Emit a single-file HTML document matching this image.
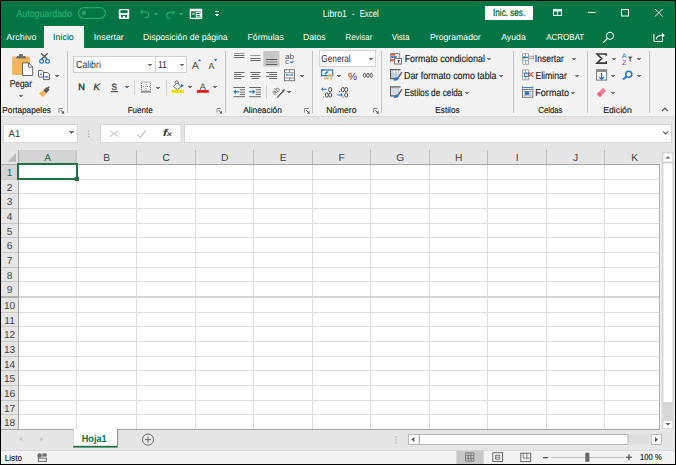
<!DOCTYPE html>
<html><head><meta charset="utf-8"><style>
html,body{margin:0;padding:0;width:676px;height:465px;overflow:hidden;background:#fff}
svg{display:block}
text{font-family:"Liberation Sans",sans-serif}
</style></head><body>
<svg width="676" height="465" viewBox="0 0 676 465">
<rect x="0" y="0" width="676" height="465" fill="#000" />
<rect x="1" y="1" width="674" height="463" fill="#fff" />
<rect x="1" y="1" width="674" height="47" fill="#037544" />
<rect x="1" y="48" width="674" height="68" fill="#f3f3f3" />
<rect x="1" y="116" width="674" height="1" fill="#d8d8d8" />
<rect x="1" y="117" width="674" height="33" fill="#e6e6e6" />
<rect x="78.6" y="7.6" width="26.8" height="10.8" rx="5.4" fill="none" stroke="#22a667" stroke-width="1.3"/>
<circle cx="84" cy="13" r="2.2" fill="#22a667"/>
<rect x="118.8" y="9.1" width="10.4" height="9.8" fill="#fff" />
<rect x="120.4" y="10.2" width="7.2" height="2.9" fill="#037544" />
<rect x="121" y="14.9" width="6" height="2.6" fill="#037544" />
<rect x="122.9" y="15.9" width="2.2" height="2.2" fill="#fff" />
<path d="M141 11.8h4.8a2.9 2.9 0 0 1 0 5.8h-0.8" fill="none" stroke="#22a667" stroke-width="1.3" />
<path d="M139.8 11.8l2.8-2.6v5.2z" fill="#22a667" />
<path d="M154 13h4v1h-1v1h-2v-1h-1z" fill="#22a667"/>
<path d="M174 12.5h-4.5a2.9 2.9 0 0 0 0 5.8h0.8" fill="none" stroke="#22a667" stroke-width="1.3" />
<path d="M175.4 12.5l-2.8-2.6v5.2z" fill="#22a667" />
<path d="M179 13h4v1h-1v1h-2v-1h-1z" fill="#22a667"/>
<rect x="190.4" y="9.4" width="11.2" height="9" fill="none" stroke="#fff" stroke-width="1.3"/>
<rect x="190.5" y="9.5" width="11" height="1.8" fill="#fff" />
<rect x="192" y="13.5" width="3" height="1" fill="#fff" />
<rect x="196.3" y="12.3" width="4" height="2.3" fill="none" stroke="#fff" stroke-width="1"/>
<rect x="196.3" y="14.6" width="4" height="2.3" fill="none" stroke="#fff" stroke-width="1"/>
<rect x="215.3" y="11" width="3.5" height="1" fill="#fff" />
<path d="M215 14h4v1h-1v1h-2v-1h-1z" fill="#fff"/>
<rect x="485" y="6" width="48" height="14" fill="#fff" />
<rect x="553.5" y="9.5" width="8" height="6" fill="none" stroke="#fff" stroke-width="1"/>
<rect x="554" y="10" width="7" height="1.5" fill="#fff" />
<rect x="557" y="10" width="1" height="5" fill="#fff" />
<rect x="588" y="12" width="7.5" height="1" fill="#fff" />
<rect x="621.5" y="9.5" width="7" height="6.5" fill="none" stroke="#fff" stroke-width="1"/>
<path d="M655 9l7.5 7.5M662.5 9l-7.5 7.5" fill="none" stroke="#fff" stroke-width="1" />
<rect x="44" y="26" width="40" height="22" fill="#f3f3f3" />
<circle cx="610" cy="35.8" r="3.6" fill="none" stroke="#fff" stroke-width="1"/>
<path d="M607.4 38.5l-4.2 4.2" fill="none" stroke="#fff" stroke-width="1.1" />
<path d="M653.9 34v7.5h8.6v-3.5" fill="none" stroke="#fff" stroke-width="1" />
<path d="M656.3 39.5c0-3 2-4.2 6-4.2" fill="none" stroke="#fff" stroke-width="1.1" />
<path d="M662 32.7l2.8 2.6-2.8 2.6z" fill="#fff" />
<rect x="67" y="51" width="1" height="62" fill="#c4c4c4" />
<rect x="225" y="51" width="1" height="62" fill="#c4c4c4" />
<rect x="312" y="51" width="1" height="62" fill="#c4c4c4" />
<rect x="381" y="51" width="1" height="62" fill="#c4c4c4" />
<rect x="513" y="51" width="1" height="62" fill="#c4c4c4" />
<rect x="587" y="51" width="1" height="62" fill="#c4c4c4" />
<rect x="649" y="51" width="1" height="62" fill="#c4c4c4" />
<path d="M59.0 112.5v-4h4" fill="none" stroke="#8a8a8a" stroke-width="1" />
<path d="M60.7 110.2l3.3 3.3" fill="none" stroke="#555" stroke-width="1" />
<path d="M64.0 110.8v2.7h-2.7z" fill="#555" />
<path d="M217.0 112.5v-4h4" fill="none" stroke="#8a8a8a" stroke-width="1" />
<path d="M218.7 110.2l3.3 3.3" fill="none" stroke="#555" stroke-width="1" />
<path d="M222.0 110.8v2.7h-2.7z" fill="#555" />
<path d="M304.5 112.5v-4h4" fill="none" stroke="#8a8a8a" stroke-width="1" />
<path d="M306.2 110.2l3.3 3.3" fill="none" stroke="#555" stroke-width="1" />
<path d="M309.5 110.8v2.7h-2.7z" fill="#555" />
<path d="M373.5 112.5v-4h4" fill="none" stroke="#8a8a8a" stroke-width="1" />
<path d="M375.2 110.2l3.3 3.3" fill="none" stroke="#555" stroke-width="1" />
<path d="M378.5 110.8v2.7h-2.7z" fill="#555" />
<path d="M662 111l2.9-2.9 2.9 2.9" fill="none" stroke="#555" stroke-width="1.2" />
<rect x="12.1" y="56.5" width="17.9" height="18.5" rx="1.2" fill="#f2b660"/>
<path d="M16 58.6h10.3l-1-2.6h-8.3z" fill="#6e6e6e" />
<rect x="18.8" y="54" width="4.2" height="2.4" rx="1" fill="#6e6e6e"/>
<path d="M22.5 62.9h6.2l4 4v8.6h-10.2z" fill="#fff" stroke="#666" stroke-width="1" />
<path d="M28.5 62.9v4.2h4.2" fill="none" stroke="#666" stroke-width="1" />
<path d="M19 95h4v1h-1v1h-2v-1h-1z" fill="#737373"/>
<path d="M41 53.2l6.8 6.6M47.8 53.2l-6.8 6.6" fill="none" stroke="#505050" stroke-width="1.2" />
<circle cx="41.6" cy="61.2" r="1.9" fill="none" stroke="#2b79c2" stroke-width="1.2"/>
<circle cx="47.5" cy="61.2" r="1.9" fill="none" stroke="#2b79c2" stroke-width="1.2"/>
<path d="M38.6 70.4h3.5l1.4 1.4v5.2h-4.9z" fill="#fff" stroke="#666" stroke-width="1" />
<path d="M43.5 72.5h4.3l1.8 1.8v5.3h-6.1z" fill="#fff" stroke="#666" stroke-width="1" />
<rect x="40" y="73.5" width="2" height="1.3" fill="#2b79c2" />
<rect x="44.5" y="76.2" width="4" height="1.3" fill="#2b79c2" />
<path d="M55 75h4v1h-1v1h-2v-1h-1z" fill="#737373"/>
<path d="M38.9 93.6l3.8-3.2 3.6 3.4-3.4 3.3z" fill="#f2b660" />
<path d="M43.2 90.2l3.6-3.2 2.8 2.8-3.4 3.5z" fill="#5a5a5a" />
<path d="M47.5 87.6l1.4-1.3 1 1-1.3 1.4z" fill="#5a5a5a" />
<rect x="73.5" y="56.5" width="82" height="16" fill="#fff" stroke="#d2d2d2" stroke-width="1"/>
<rect x="155.5" y="56.5" width="31" height="16" fill="#fff" stroke="#d2d2d2" stroke-width="1"/>
<path d="M148 64h4v1h-1v1h-2v-1h-1z" fill="#737373"/>
<path d="M180 64h4v1h-1v1h-2v-1h-1z" fill="#737373"/>
<text x="191.8" y="68.8" font-size="10.2" fill="#4a4a4a" textLength="7.1" lengthAdjust="spacingAndGlyphs" text-rendering="geometricPrecision">A</text>
<path d="M197.8 61.3l1.75-2.3 1.75 2.3z" fill="#2b79c2" />
<text x="208.5" y="68.8" font-size="8.6" fill="#4a4a4a" textLength="5.8" lengthAdjust="spacingAndGlyphs" text-rendering="geometricPrecision">A</text>
<path d="M213.9 59.1h3.3l-1.65 2.5z" fill="#2b79c2" />
<text x="78.2" y="90" font-size="9.2" fill="#3a3a3a" textLength="6.6" lengthAdjust="spacingAndGlyphs" stroke="#3a3a3a" stroke-width="0.45" text-rendering="geometricPrecision">N</text>
<text x="93.6" y="90" font-size="9.2" fill="#3a3a3a" textLength="6.4" lengthAdjust="spacingAndGlyphs" font-style="italic" stroke="#3a3a3a" stroke-width="0.3" text-rendering="geometricPrecision">K</text>
<text x="111.5" y="90" font-size="9.2" fill="#3a3a3a" textLength="5.4" lengthAdjust="spacingAndGlyphs" stroke="#3a3a3a" stroke-width="0.3" text-rendering="geometricPrecision">S</text>
<rect x="111" y="91" width="7" height="1.2" fill="#555" />
<path d="M125 86h4v1h-1v1h-2v-1h-1z" fill="#737373"/>
<rect x="134" y="80" width="1" height="15" fill="#d0d0d0" />
<rect x="141.5" y="82" width="9" height="9" fill="none" stroke="#777" stroke-width="1" stroke-dasharray="1 1"/>
<path d="M141 86.5h10M146 82v9" fill="none" stroke="#999" stroke-width="1" stroke-dasharray="1 1"/>
<rect x="141" y="91.4" width="10" height="1.1" fill="#666" />
<path d="M156 87h4v1h-1v1h-2v-1h-1z" fill="#737373"/>
<rect x="166" y="80" width="1" height="15" fill="#d0d0d0" />
<path d="M175.3 83.8v-1.5a1.5 1.5 0 0 1 3 0v2" fill="none" stroke="#707070" stroke-width="1" />
<path d="M173.6 86.3l3.6-3.2 3.8 3.4-3.6 3.2z" fill="#fff" stroke="#707070" stroke-width="1" />
<path d="M180.8 83.6l3.2 2.2-3.2 1.8z" fill="#2b79c2" />
<rect x="172" y="89.8" width="12" height="3.1" fill="#ece00a" />
<path d="M188 86h4v1h-1v1h-2v-1h-1z" fill="#737373"/>
<text x="199.6" y="89.6" font-size="9.6" fill="#505050" textLength="6.5" lengthAdjust="spacingAndGlyphs" text-rendering="geometricPrecision">A</text>
<rect x="196.8" y="90" width="12" height="2.8" fill="#e42222" />
<path d="M213 86h4v1h-1v1h-2v-1h-1z" fill="#737373"/>
<rect x="234" y="53" width="10.5" height="1" fill="#9a9a9a" />
<rect x="234" y="55" width="10.5" height="1" fill="#6a6a6a" />
<rect x="234" y="57" width="10.5" height="1" fill="#6a6a6a" />
<rect x="250.2" y="55" width="10.300000000000011" height="1" fill="#9a9a9a" />
<rect x="250.2" y="58" width="10.300000000000011" height="1" fill="#6a6a6a" />
<rect x="250.2" y="60" width="10.300000000000011" height="1" fill="#6a6a6a" />
<rect x="263.3" y="51" width="16.2" height="15.6" fill="#c8c8c8" />
<rect x="266.2" y="59" width="10.900000000000034" height="1" fill="#5a5a5a" />
<rect x="266.2" y="61.5" width="10.900000000000034" height="1" fill="#8a8a8a" />
<rect x="266.2" y="64" width="10.900000000000034" height="1" fill="#5a5a5a" />
<text x="285" y="58.8" font-size="7.6" fill="#555" textLength="9.2" lengthAdjust="spacingAndGlyphs" text-rendering="geometricPrecision">ab</text>
<text x="285" y="63.6" font-size="7.6" fill="#555" textLength="4" lengthAdjust="spacingAndGlyphs" text-rendering="geometricPrecision">c</text>
<path d="M290.6 62.3h2.5v-1.6" fill="none" stroke="#2b79c2" stroke-width="1" />
<path d="M289.8 62.3l1.5-1.3v2.6z" fill="#2b79c2" />
<rect x="234.1" y="72" width="10.400000000000006" height="1" fill="#6a6a6a" />
<rect x="250.2" y="72" width="10.300000000000011" height="1" fill="#6a6a6a" />
<rect x="266.2" y="72" width="10.900000000000034" height="1" fill="#6a6a6a" />
<rect x="234.1" y="74" width="7.300000000000011" height="1" fill="#6a6a6a" />
<rect x="251.6" y="74" width="7.500000000000028" height="1" fill="#6a6a6a" />
<rect x="269.2" y="74" width="7.900000000000034" height="1" fill="#6a6a6a" />
<rect x="234.1" y="76" width="10.400000000000006" height="1" fill="#6a6a6a" />
<rect x="250.2" y="76" width="10.300000000000011" height="1" fill="#6a6a6a" />
<rect x="266.2" y="76" width="10.900000000000034" height="1" fill="#6a6a6a" />
<rect x="234.1" y="78" width="7.300000000000011" height="1" fill="#6a6a6a" />
<rect x="251.6" y="78" width="7.500000000000028" height="1" fill="#6a6a6a" />
<rect x="269.2" y="78" width="7.900000000000034" height="1" fill="#6a6a6a" />
<rect x="284.5" y="69.7" width="10" height="11" fill="#fff" stroke="#7a7a7a" stroke-width="1"/>
<rect x="284.5" y="72.3" width="10.0" height="1" fill="#888" />
<rect x="284.5" y="77.5" width="10.0" height="1" fill="#888" />
<rect x="289.2" y="70" width="1" height="2.299999999999997" fill="#888" />
<rect x="289.2" y="78" width="1" height="2.5" fill="#888" />
<path d="M286.5 75h6" fill="none" stroke="#2b79c2" stroke-width="0.9" />
<path d="M285.8 75l1.4-1.3v2.6z M293.2 75l-1.4-1.3v2.6z" fill="#2b79c2" />
<path d="M300 75h4v1h-1v1h-2v-1h-1z" fill="#737373"/>
<rect x="233.3" y="87" width="11.699999999999989" height="1" fill="#6a6a6a" />
<rect x="233.3" y="96.2" width="11.699999999999989" height="1" fill="#6a6a6a" />
<rect x="239.8" y="89.2" width="5.199999999999989" height="1" fill="#6a6a6a" />
<rect x="239.8" y="91.7" width="5.199999999999989" height="1" fill="#6a6a6a" />
<rect x="239.8" y="94" width="5.199999999999989" height="1" fill="#6a6a6a" />
<path d="M234.10000000000002 91.8h5.2" fill="none" stroke="#2b79c2" stroke-width="1.3" />
<path d="M233.3 91.8l2.6-2.4v4.8z" fill="#2b79c2" />
<rect x="249.2" y="87" width="11.699999999999989" height="1" fill="#6a6a6a" />
<rect x="249.2" y="96.2" width="11.699999999999989" height="1" fill="#6a6a6a" />
<rect x="255.7" y="89.2" width="5.199999999999989" height="1" fill="#6a6a6a" />
<rect x="255.7" y="91.7" width="5.199999999999989" height="1" fill="#6a6a6a" />
<rect x="255.7" y="94" width="5.199999999999989" height="1" fill="#6a6a6a" />
<path d="M249.2 91.8h5.2" fill="none" stroke="#2b79c2" stroke-width="1.3" />
<path d="M255.2 91.8l-2.6-2.4v4.8z" fill="#2b79c2" />
<rect x="266" y="85" width="1" height="14" fill="#d0d0d0" />
<g transform="translate(274.6 95.2) rotate(-45)"><text x="0" y="0" font-size="7.4" fill="#555" textLength="8" lengthAdjust="spacingAndGlyphs" text-rendering="geometricPrecision">ab</text></g>
<path d="M277.2 97.6l6.2-6.6" fill="none" stroke="#555" stroke-width="1.1" />
<path d="M284.8 89.3l-0.5 3-2.6-2.4z" fill="#555" />
<path d="M287 91h4v1h-1v1h-2v-1h-1z" fill="#737373"/>
<rect x="319.5" y="50.5" width="56" height="16" fill="#fff" stroke="#d2d2d2" stroke-width="1"/>
<path d="M369 58h4v1h-1v1h-2v-1h-1z" fill="#737373"/>
<rect x="321.6" y="70" width="11" height="5.6" fill="#fff" stroke="#2b79c2" stroke-width="1.3"/>
<path d="M321 69.4h3l-3 2.6z M333.2 76.2h-3l3-2.6z" fill="#2b79c2" />
<path d="M325.3 74.6c0.6-2.4 1.6-3 3.2-2.6" fill="none" stroke="#2b79c2" stroke-width="1.5" />
<rect x="328.2" y="74.3" width="4.6" height="1.8" fill="#f2b660" />
<rect x="324" y="77.5" width="4.7" height="1.9" fill="#f2b660" />
<rect x="330.2" y="77.5" width="2" height="1.9" fill="#f2b660" />
<path d="M337 75h4v1h-1v1h-2v-1h-1z" fill="#737373"/>
<text x="348" y="80" font-size="10.6" fill="#505050" textLength="9.2" lengthAdjust="spacingAndGlyphs" text-rendering="geometricPrecision">%</text>
<ellipse cx="364.6" cy="75.3" rx="1.2" ry="2.1" fill="none" stroke="#505050" stroke-width="0.9"/>
<ellipse cx="367.90000000000003" cy="75.3" rx="1.2" ry="2.1" fill="none" stroke="#505050" stroke-width="0.9"/>
<ellipse cx="371.20000000000005" cy="75.3" rx="1.2" ry="2.1" fill="none" stroke="#505050" stroke-width="0.9"/>
<path d="M322 89.3h4.5" fill="none" stroke="#2b79c2" stroke-width="1.1" />
<path d="M321 89.3l2.2-2v4z" fill="#2b79c2" />
<ellipse cx="330.2" cy="89.6" rx="1.5" ry="2.2" fill="none" stroke="#505050" stroke-width="1"/>
<ellipse cx="326.8" cy="95" rx="1.5" ry="2.2" fill="none" stroke="#505050" stroke-width="1"/>
<ellipse cx="330.2" cy="95" rx="1.5" ry="2.2" fill="none" stroke="#505050" stroke-width="1"/>
<rect x="323.2" y="96.6" width="1" height="1" fill="#505050" />
<ellipse cx="342.8" cy="89.6" rx="1.5" ry="2.2" fill="none" stroke="#505050" stroke-width="1"/>
<ellipse cx="346.2" cy="89.6" rx="1.5" ry="2.2" fill="none" stroke="#505050" stroke-width="1"/>
<rect x="339.2" y="91.2" width="1" height="1" fill="#505050" />
<ellipse cx="346.2" cy="95" rx="1.5" ry="2.2" fill="none" stroke="#505050" stroke-width="1"/>
<rect x="342.6" y="96.6" width="1" height="1" fill="#505050" />
<path d="M337.6 95h4" fill="none" stroke="#2b79c2" stroke-width="1.1" />
<path d="M343 95l-2.2-2v4z" fill="#2b79c2" />
<path d="M390.6 62.5v-9h9v4.5" fill="none" stroke="#8a8a8a" stroke-width="1" />
<path d="M395.5 53.6v4.3M390.6 56.6h9" fill="none" stroke="#c8c8c8" stroke-width="0.8" />
<rect x="391.1" y="53.8" width="3.9" height="1.8" fill="#e8532a" />
<rect x="391.1" y="56.2" width="5.6" height="1.6" fill="#2b79c2" />
<rect x="391.1" y="59" width="2.5" height="2.4" fill="#e8532a" />
<rect x="394.6" y="58.4" width="7" height="5.6" fill="#fff" stroke="#707070" stroke-width="1"/>
<path d="M397 60.3h3.4l-1.2 1.3v1.2h-1v-1.2z" fill="#333" />
<path d="M487 58h4v1h-1v1h-2v-1h-1z" fill="#7a7a7a"/>
<rect x="391" y="70" width="8.5" height="8" fill="#fff" />
<rect x="391" y="72.5" width="7.5" height="5.5" fill="#c9ddf1" />
<path d="M392.9 70v8M395.8 70v8M398.7 70v5" fill="none" stroke="#b0b0b0" stroke-width="0.8" />
<path d="M400.6 69.6h-10v9h5.2" fill="none" stroke="#5e5e5e" stroke-width="1.2" />
<path d="M397.6 77.2l3.4-4.9c0.7-1 1.6-0.8 1.2 0.4l-3 5z" fill="#585858" />
<path d="M393.4 80.6c0.6-2.4 2.2-3.4 4.2-3.6l1.4 1.2c-0.6 2-2.6 2.6-5.6 2.4z" fill="#2b79c2" />
<rect x="391" y="87.2" width="8.5" height="8" fill="#fff" />
<rect x="393.3" y="88.60000000000001" width="5.2" height="5.4" fill="#c9ddf1" />
<path d="M392.8 87.2v8M398.7 87.2v5.5M393 88.10000000000001h5.6" fill="none" stroke="#b0b0b0" stroke-width="0.8" />
<path d="M400.6 86.8h-10v9h5.2" fill="none" stroke="#5e5e5e" stroke-width="1.2" />
<path d="M397.6 94.4l3.4-4.9c0.7-1 1.6-0.8 1.2 0.4l-3 5z" fill="#585858" />
<path d="M393.4 97.8c0.6-2.4 2.2-3.4 4.2-3.6l1.4 1.2c-0.6 2-2.6 2.6-5.6 2.4z" fill="#2b79c2" />
<path d="M499 75h4v1h-1v1h-2v-1h-1z" fill="#7a7a7a"/>
<path d="M465 92h4v1h-1v1h-2v-1h-1z" fill="#7a7a7a"/>
<path d="M522.6 53.7h6v10.6h-6zM522.6 57.2h6M522.6 60.8h6M525.6 60.8v3.5M525.6 53.7v3.5" fill="#fff" stroke="#9a9a9a" stroke-width="0.9" />
<rect x="528.6" y="56.2" width="5" height="2.5" fill="#dfe6ee" stroke="#9a9a9a" stroke-width="0.9"/>
<path d="M523.5 57.5h4.5" fill="none" stroke="#2b79c2" stroke-width="1.2" />
<path d="M522.5 57.5l2.2-2v4z" fill="#2b79c2" />
<path d="M572 58h4v1h-1v1h-2v-1h-1z" fill="#7a7a7a"/>
<path d="M522.6 69.8h6v10h-6zM522.6 73.1h6M522.6 76.5h6M525.6 69.8v3.3M525.6 76.5v3.3" fill="#fff" stroke="#9a9a9a" stroke-width="0.9" />
<rect x="524.5" y="73.2" width="4" height="3.2" fill="#cfe0f0" stroke="#2b79c2" stroke-width="0.9"/>
<path d="M528.4 72.2l4.6 4.6M533 72.2l-4.6 4.6" fill="none" stroke="#e8502e" stroke-width="1.2" />
<path d="M575 75h4v1h-1v1h-2v-1h-1z" fill="#7a7a7a"/>
<path d="M522.5 87.6h10.3" fill="none" stroke="#2b79c2" stroke-width="1" />
<path d="M522.5 86.3v2.6M532.8 86.3v2.6" fill="none" stroke="#2b79c2" stroke-width="0.8" />
<rect x="522.5" y="89.5" width="10.3" height="7.8" fill="#fff" stroke="#7a7a7a" stroke-width="1"/>
<path d="M524.8 89.5v7.8M530.3 89.5v7.8M522.5 91.5h10.3M522.5 95.3h10.3" fill="none" stroke="#aaa" stroke-width="0.8" />
<rect x="525" y="91.2" width="4.2" height="3.8" fill="#2b79c2" />
<path d="M571 92h4v1h-1v1h-2v-1h-1z" fill="#7a7a7a"/>
<path d="M606.3 55.8v-1.8h-9.3l4.6 4.5-4.6 4.6h9.3v-1.8" fill="none" stroke="#3a3a3a" stroke-width="1.6" stroke-linejoin="miter"/>
<path d="M612 58h4v1h-1v1h-2v-1h-1z" fill="#7a7a7a"/>
<text x="621.8" y="58.3" font-size="6.6" fill="#2b79c2" textLength="4.8" lengthAdjust="spacingAndGlyphs" text-rendering="geometricPrecision">A</text>
<text x="621.8" y="64.6" font-size="6.6" fill="#8a3fb5" textLength="4.6" lengthAdjust="spacingAndGlyphs" text-rendering="geometricPrecision">Z</text>
<path d="M627.8 56.5h4.7l-1.7 2.4v2.5h-1.3v-2.5z" fill="#666" />
<path d="M637 58h4v1h-1v1h-2v-1h-1z" fill="#7a7a7a"/>
<rect x="596.6" y="69.9" width="10" height="10.2" fill="#fff" stroke="#7a7a7a" stroke-width="1"/>
<rect x="596.1" y="69.4" width="11" height="2.6" fill="#8a8a8a" />
<path d="M601.6 73v6.3M599.2 77l2.4 2.4 2.4-2.4" fill="none" stroke="#2b79c2" stroke-width="1.3" />
<path d="M611 75h4v1h-1v1h-2v-1h-1z" fill="#7a7a7a"/>
<circle cx="628.8" cy="74.2" r="3" fill="none" stroke="#2b79c2" stroke-width="1.6"/>
<path d="M626.6 76.5l-3.6 3" fill="none" stroke="#2b79c2" stroke-width="2" />
<path d="M637 75h4v1h-1v1h-2v-1h-1z" fill="#7a7a7a"/>
<path d="M597 94l6-6.2 3 3-6 6.2z" fill="#f07b9b" />
<path d="M597 94l2 -2 3 3-2 2z" fill="#e8607f" />
<path d="M611 92h4v1h-1v1h-2v-1h-1z" fill="#7a7a7a"/>
<rect x="3.5" y="124.5" width="74" height="18" fill="#fff" stroke="#d6d6d6" stroke-width="1"/>
<path d="M69 131h5v1h-1v1h-1v1h-1v-1h-1v-1h-1z" fill="#737373"/>
<rect x="88.3" y="130.6" width="1" height="1.2" fill="#999" />
<rect x="88.3" y="133.3" width="1" height="1.2" fill="#999" />
<rect x="88.3" y="136" width="1" height="1.2" fill="#999" />
<rect x="100.5" y="124.5" width="80.5" height="18" fill="#fff" stroke="#d6d6d6" stroke-width="1"/>
<path d="M109.8 130.6l8.8 6M118.6 130.6l-8.8 6" fill="none" stroke="#c4c4c4" stroke-width="1.1" />
<path d="M137 134.2l3.4 3.2 5.6-7.2" fill="none" stroke="#c4c4c4" stroke-width="1.3" />
<text x="162.8" y="136" font-size="10" fill="#444" font-weight="bold" textLength="4.6" lengthAdjust="spacingAndGlyphs" font-style="italic" font-family="Liberation Serif" text-rendering="geometricPrecision">f</text>
<text x="166.8" y="135.6" font-size="6.6" fill="#444" font-weight="bold" textLength="5.2" lengthAdjust="spacingAndGlyphs" font-style="italic" font-family="Liberation Serif" text-rendering="geometricPrecision">x</text>
<rect x="184.5" y="124.5" width="487" height="18" fill="#fff" stroke="#d6d6d6" stroke-width="1"/>
<path d="M663.2 131.4l2.5 2.5 2.5-2.5" fill="none" stroke="#555" stroke-width="1.1" />
<rect x="1" y="150" width="674" height="279" fill="#fff" />
<rect x="1" y="150" width="674" height="14" fill="#e6e6e6" />
<rect x="1" y="164" width="17" height="265" fill="#e6e6e6" />
<rect x="19" y="150" width="57" height="14" fill="#d4d4d4" />
<rect x="1" y="164" width="17" height="15.5" fill="#d4d4d4" />
<path d="M16 153.1v8.6h-8.2z" fill="#b8b8b8" />
<rect x="76" y="164" width="1" height="265" fill="#dedede" />
<rect x="76" y="150" width="1" height="14" fill="#bcbcbc" />
<rect x="136" y="164" width="1" height="265" fill="#dedede" />
<rect x="136" y="150" width="1" height="14" fill="#bcbcbc" />
<rect x="195" y="164" width="1" height="265" fill="#dedede" />
<rect x="195" y="150" width="1" height="14" fill="#bcbcbc" />
<rect x="253" y="164" width="1" height="265" fill="#dedede" />
<rect x="253" y="150" width="1" height="14" fill="#bcbcbc" />
<rect x="312" y="164" width="1" height="265" fill="#dedede" />
<rect x="312" y="150" width="1" height="14" fill="#bcbcbc" />
<rect x="370" y="164" width="1" height="265" fill="#dedede" />
<rect x="370" y="150" width="1" height="14" fill="#bcbcbc" />
<rect x="429" y="164" width="1" height="265" fill="#dedede" />
<rect x="429" y="150" width="1" height="14" fill="#bcbcbc" />
<rect x="487" y="164" width="1" height="265" fill="#dedede" />
<rect x="487" y="150" width="1" height="14" fill="#bcbcbc" />
<rect x="546" y="164" width="1" height="265" fill="#dedede" />
<rect x="546" y="150" width="1" height="14" fill="#bcbcbc" />
<rect x="604" y="164" width="1" height="265" fill="#dedede" />
<rect x="604" y="150" width="1" height="14" fill="#bcbcbc" />
<rect x="18" y="179" width="642" height="1" fill="#dedede" />
<rect x="1" y="179" width="17" height="1" fill="#c6c6c6" />
<rect x="18" y="193" width="642" height="1" fill="#dedede" />
<rect x="1" y="193" width="17" height="1" fill="#c6c6c6" />
<rect x="18" y="208" width="642" height="1" fill="#dedede" />
<rect x="1" y="208" width="17" height="1" fill="#c6c6c6" />
<rect x="18" y="223" width="642" height="1" fill="#dedede" />
<rect x="1" y="223" width="17" height="1" fill="#c6c6c6" />
<rect x="18" y="237" width="642" height="1" fill="#dedede" />
<rect x="1" y="237" width="17" height="1" fill="#c6c6c6" />
<rect x="18" y="252" width="642" height="1" fill="#dedede" />
<rect x="1" y="252" width="17" height="1" fill="#c6c6c6" />
<rect x="18" y="267" width="642" height="1" fill="#dedede" />
<rect x="1" y="267" width="17" height="1" fill="#c6c6c6" />
<rect x="18" y="281" width="642" height="1" fill="#dedede" />
<rect x="1" y="281" width="17" height="1" fill="#c6c6c6" />
<rect x="18" y="296" width="642" height="2" fill="#d4d4d4" />
<rect x="1" y="296" width="17" height="2" fill="#b0b0b0" />
<rect x="18" y="312" width="642" height="1" fill="#dedede" />
<rect x="1" y="312" width="17" height="1" fill="#c6c6c6" />
<rect x="18" y="326" width="642" height="1" fill="#dedede" />
<rect x="1" y="326" width="17" height="1" fill="#c6c6c6" />
<rect x="18" y="341" width="642" height="1" fill="#dedede" />
<rect x="1" y="341" width="17" height="1" fill="#c6c6c6" />
<rect x="18" y="356" width="642" height="1" fill="#dedede" />
<rect x="1" y="356" width="17" height="1" fill="#c6c6c6" />
<rect x="18" y="370" width="642" height="1" fill="#dedede" />
<rect x="1" y="370" width="17" height="1" fill="#c6c6c6" />
<rect x="18" y="385" width="642" height="1" fill="#dedede" />
<rect x="1" y="385" width="17" height="1" fill="#c6c6c6" />
<rect x="18" y="400" width="642" height="1" fill="#dedede" />
<rect x="1" y="400" width="17" height="1" fill="#c6c6c6" />
<rect x="18" y="414" width="642" height="1" fill="#dedede" />
<rect x="1" y="414" width="17" height="1" fill="#c6c6c6" />
<rect x="18" y="150" width="1" height="279" fill="#a8a8a8" />
<rect x="1" y="164" width="659" height="1" fill="#a8a8a8" />
<text x="47.6" y="161" font-size="10.2" fill="#1e6b3f" text-anchor="middle" text-rendering="geometricPrecision">A</text>
<text x="106.6" y="161" font-size="10.2" fill="#444" text-anchor="middle" text-rendering="geometricPrecision">B</text>
<text x="166.1" y="161" font-size="10.2" fill="#444" text-anchor="middle" text-rendering="geometricPrecision">C</text>
<text x="224.6" y="161" font-size="10.2" fill="#444" text-anchor="middle" text-rendering="geometricPrecision">D</text>
<text x="283.1" y="161" font-size="10.2" fill="#444" text-anchor="middle" text-rendering="geometricPrecision">E</text>
<text x="341.6" y="161" font-size="10.2" fill="#444" text-anchor="middle" text-rendering="geometricPrecision">F</text>
<text x="400.1" y="161" font-size="10.2" fill="#444" text-anchor="middle" text-rendering="geometricPrecision">G</text>
<text x="458.6" y="161" font-size="10.2" fill="#444" text-anchor="middle" text-rendering="geometricPrecision">H</text>
<text x="517.1" y="161" font-size="10.2" fill="#444" text-anchor="middle" text-rendering="geometricPrecision">I</text>
<text x="575.6" y="161" font-size="10.2" fill="#444" text-anchor="middle" text-rendering="geometricPrecision">J</text>
<text x="634.6" y="161" font-size="10.2" fill="#444" text-anchor="middle" text-rendering="geometricPrecision">K</text>
<text x="9.6" y="176" font-size="10.2" fill="#1e6b3f" text-anchor="middle" text-rendering="geometricPrecision">1</text>
<text x="9.6" y="191" font-size="10.2" fill="#444" text-anchor="middle" text-rendering="geometricPrecision">2</text>
<text x="9.6" y="205" font-size="10.2" fill="#444" text-anchor="middle" text-rendering="geometricPrecision">3</text>
<text x="9.6" y="220" font-size="10.2" fill="#444" text-anchor="middle" text-rendering="geometricPrecision">4</text>
<text x="9.6" y="235" font-size="10.2" fill="#444" text-anchor="middle" text-rendering="geometricPrecision">5</text>
<text x="9.6" y="249" font-size="10.2" fill="#444" text-anchor="middle" text-rendering="geometricPrecision">6</text>
<text x="9.6" y="264" font-size="10.2" fill="#444" text-anchor="middle" text-rendering="geometricPrecision">7</text>
<text x="9.6" y="279" font-size="10.2" fill="#444" text-anchor="middle" text-rendering="geometricPrecision">8</text>
<text x="9.6" y="293" font-size="10.2" fill="#444" text-anchor="middle" text-rendering="geometricPrecision">9</text>
<text x="9.6" y="309" font-size="10.2" fill="#444" text-anchor="middle" text-rendering="geometricPrecision">10</text>
<text x="9.6" y="324" font-size="10.2" fill="#444" text-anchor="middle" text-rendering="geometricPrecision">11</text>
<text x="9.6" y="338" font-size="10.2" fill="#444" text-anchor="middle" text-rendering="geometricPrecision">12</text>
<text x="9.6" y="353" font-size="10.2" fill="#444" text-anchor="middle" text-rendering="geometricPrecision">13</text>
<text x="9.6" y="368" font-size="10.2" fill="#444" text-anchor="middle" text-rendering="geometricPrecision">14</text>
<text x="9.6" y="382" font-size="10.2" fill="#444" text-anchor="middle" text-rendering="geometricPrecision">15</text>
<text x="9.6" y="397" font-size="10.2" fill="#444" text-anchor="middle" text-rendering="geometricPrecision">16</text>
<text x="9.6" y="412" font-size="10.2" fill="#444" text-anchor="middle" text-rendering="geometricPrecision">17</text>
<text x="9.6" y="426" font-size="10.2" fill="#444" text-anchor="middle" text-rendering="geometricPrecision">18</text>
<rect x="18" y="164" width="59" height="15" fill="none" stroke="#1e7145" stroke-width="2"/>
<rect x="74.8" y="176.8" width="4.2" height="4.2" fill="#1e7145" />
<rect x="659" y="164" width="1" height="265" fill="#b0b0b0" />
<rect x="660.4" y="164" width="14.6" height="265" fill="#e6e6e6" />
<rect x="662.8" y="152.9" width="10.2" height="9.2" fill="#fff" stroke="#cacaca" stroke-width="1"/>
<path d="M665.3 158.6l2.6-2.4 2.6 2.4z" fill="#666" />
<rect x="662.3" y="403" width="11.2" height="17" fill="#d8d8d8" />
<rect x="662.8" y="162.9" width="10.2" height="240" fill="#fff" stroke="#cacaca" stroke-width="1"/>
<rect x="662.8" y="420.1" width="10.2" height="8.7" fill="#fff" stroke="#cacaca" stroke-width="1"/>
<path d="M665.3 423h5.2l-2.6 2.4z" fill="#666" />
<rect x="1" y="429.5" width="674" height="20.5" fill="#e6e6e6" />
<rect x="1" y="429" width="659" height="1" fill="#a6a6a6" />
<path d="M22.2 437v4l-3-2z" fill="#c2c2c2" />
<path d="M40.4 437v4l3-2z" fill="#c2c2c2" />
<rect x="73.3" y="429" width="44.4" height="17" fill="#fff" />
<rect x="117" y="429" width="1.2" height="17" fill="#9a9a9a" />
<rect x="73.2" y="429" width="0.8" height="17" fill="#cfcfcf" />
<rect x="73.3" y="445.8" width="44.4" height="1.8" fill="#1e7145" />
<circle cx="148" cy="439.6" r="5.6" fill="none" stroke="#6a6a6a" stroke-width="1"/>
<path d="M145 439.6h6M148 436.6v6" fill="none" stroke="#6a6a6a" stroke-width="1" />
<rect x="395.5" y="436.5" width="1" height="1.2" fill="#999" />
<rect x="395.5" y="439.3" width="1" height="1.2" fill="#999" />
<rect x="395.5" y="442.1" width="1" height="1.2" fill="#999" />
<rect x="628.4" y="434.5" width="20.5" height="10" fill="#dcdcdc" />
<rect x="408.5" y="434.5" width="219.4" height="10" fill="#fff" stroke="#b8b8b8" stroke-width="1"/>
<rect x="418.6" y="434.5" width="1.2" height="10.0" fill="#a8a8a8" />
<path d="M414.4 437.2v4.7l-3.2-2.35z" fill="#555" />
<rect x="651.3" y="434.5" width="10.2" height="10" fill="#fff" stroke="#b8b8b8" stroke-width="1"/>
<path d="M655 437v5.2l3-2.6z" fill="#555" />
<rect x="1" y="450" width="674" height="14" fill="#f3f3f3" />
<rect x="1" y="450" width="674" height="1" fill="#dadada" />
<circle cx="39.6" cy="455.5" r="2.3" fill="#6a6a6a"/>
<rect x="42.4" y="453.4" width="4.3" height="3.2" fill="#6a6a6a" />
<rect x="38.3" y="458.2" width="8" height="3.2" fill="none" stroke="#6a6a6a" stroke-width="1"/>
<rect x="456.3" y="450.5" width="27.3" height="13.5" fill="#c8c8c8" />
<path d="M465.5 452.9h8.4v8.2h-8.4zM465.5 455.6h8.4M465.5 458.4h8.4M468.3 452.9v8.2M471.1 452.9v8.2" fill="none" stroke="#777" stroke-width="0.9" />
<rect x="492.8" y="452.7" width="9.8" height="8.8" fill="none" stroke="#6a6a6a" stroke-width="1"/>
<path d="M495.6 455.3h4.2v4h-4.2zM495.6 457.3h3.2" fill="none" stroke="#6a6a6a" stroke-width="0.9" />
<rect x="520.8" y="453.2" width="9.9" height="8.4" fill="none" stroke="#6a6a6a" stroke-width="1"/>
<path d="M523.2 453.2v5h7.5M526.8 453.2v5" fill="none" stroke="#6a6a6a" stroke-width="0.9" />
<rect x="543" y="457" width="5" height="1.3" fill="#555" />
<rect x="550.7" y="457" width="73.5" height="1" fill="#c0c0c0" />
<rect x="585.3" y="452.8" width="4.1" height="8.9" fill="#666" />
<rect x="625.9" y="456.6" width="6" height="1.3" fill="#555" />
<rect x="628.3" y="454.3" width="1.3" height="6" fill="#555" />
<text x="16.37" y="17" font-size="10.2" fill="#26ab6b" stroke="#26ab6b" stroke-width="0.25" textLength="55.53" lengthAdjust="spacingAndGlyphs" text-rendering="geometricPrecision" >Autoguardado</text>
<text x="322.87" y="17" font-size="10.2" fill="#fff" textLength="23.79" lengthAdjust="spacingAndGlyphs" text-rendering="geometricPrecision" >Libro1</text>
<text x="352.03" y="17" font-size="10.2" fill="#fff" textLength="2.48" lengthAdjust="spacingAndGlyphs" text-rendering="geometricPrecision" >-</text>
<text x="359.65" y="17" font-size="10.2" fill="#fff" textLength="19.07" lengthAdjust="spacingAndGlyphs" text-rendering="geometricPrecision" >Excel</text>
<text x="493.07" y="16" font-size="10.2" fill="#0b6e3e" stroke="#0b6e3e" stroke-width="0.3" textLength="32.15" lengthAdjust="spacingAndGlyphs" text-rendering="geometricPrecision" >Inic. ses.</text>
<text x="6.22" y="40" font-size="8.7" fill="#fff" textLength="30.26" lengthAdjust="spacingAndGlyphs" text-rendering="geometricPrecision" >Archivo</text>
<text x="53.09" y="40" font-size="8.7" fill="#0b6e3e" stroke="#0b6e3e" stroke-width="0.15" textLength="20.72" lengthAdjust="spacingAndGlyphs" text-rendering="geometricPrecision" >Inicio</text>
<text x="93.87" y="40" font-size="8.7" fill="#fff" textLength="29.93" lengthAdjust="spacingAndGlyphs" text-rendering="geometricPrecision" >Insertar</text>
<text x="142.99" y="40" font-size="8.7" fill="#fff" textLength="84.69" lengthAdjust="spacingAndGlyphs" text-rendering="geometricPrecision" >Disposición de página</text>
<text x="247.53" y="40" font-size="8.7" fill="#fff" textLength="36.3" lengthAdjust="spacingAndGlyphs" text-rendering="geometricPrecision" >Fórmulas</text>
<text x="302.94" y="40" font-size="8.7" fill="#fff" textLength="22.8" lengthAdjust="spacingAndGlyphs" text-rendering="geometricPrecision" >Datos</text>
<text x="345.44" y="40" font-size="8.7" fill="#fff" textLength="26.91" lengthAdjust="spacingAndGlyphs" text-rendering="geometricPrecision" >Revisar</text>
<text x="391.63" y="40" font-size="8.7" fill="#fff" textLength="18.04" lengthAdjust="spacingAndGlyphs" text-rendering="geometricPrecision" >Vista</text>
<text x="429.99" y="40" font-size="8.7" fill="#fff" textLength="50.76" lengthAdjust="spacingAndGlyphs" text-rendering="geometricPrecision" >Programador</text>
<text x="501.22" y="40" font-size="8.7" fill="#fff" textLength="24.52" lengthAdjust="spacingAndGlyphs" text-rendering="geometricPrecision" >Ayuda</text>
<text x="546.22" y="40" font-size="8.7" fill="#fff" textLength="38.03" lengthAdjust="spacingAndGlyphs" text-rendering="geometricPrecision" >ACROBAT</text>
<text x="9.68" y="87" font-size="10.2" fill="#1a1a1a" stroke="#1a1a1a" stroke-width="0.15" textLength="22.39" lengthAdjust="spacingAndGlyphs" text-rendering="geometricPrecision" >Pegar</text>
<text x="76.09" y="68" font-size="10.2" fill="#333" textLength="24.75" lengthAdjust="spacingAndGlyphs" text-rendering="geometricPrecision" >Calibri</text>
<text x="157.91" y="68" font-size="10.2" fill="#333" textLength="9.04" lengthAdjust="spacingAndGlyphs" text-rendering="geometricPrecision" >11</text>
<text x="321.34" y="62" font-size="10.2" fill="#333" textLength="29.36" lengthAdjust="spacingAndGlyphs" text-rendering="geometricPrecision" >General</text>
<text x="404.67" y="62" font-size="10.2" fill="#1a1a1a" stroke="#1a1a1a" stroke-width="0.15" textLength="80.22" lengthAdjust="spacingAndGlyphs" text-rendering="geometricPrecision" >Formato condicional</text>
<text x="403.99" y="79" font-size="10.2" fill="#1a1a1a" stroke="#1a1a1a" stroke-width="0.15" textLength="92.51" lengthAdjust="spacingAndGlyphs" text-rendering="geometricPrecision" >Dar formato como tabla</text>
<text x="404.42" y="96" font-size="10.2" fill="#1a1a1a" stroke="#1a1a1a" stroke-width="0.15" textLength="58.06" lengthAdjust="spacingAndGlyphs" text-rendering="geometricPrecision" >Estilos de celda</text>
<text x="534.86" y="62" font-size="10.2" fill="#1a1a1a" stroke="#1a1a1a" stroke-width="0.15" textLength="28.92" lengthAdjust="spacingAndGlyphs" text-rendering="geometricPrecision" >Insertar</text>
<text x="535.4" y="79" font-size="10.2" fill="#1a1a1a" stroke="#1a1a1a" stroke-width="0.15" textLength="31.39" lengthAdjust="spacingAndGlyphs" text-rendering="geometricPrecision" >Eliminar</text>
<text x="535.35" y="96" font-size="10.2" fill="#1a1a1a" stroke="#1a1a1a" stroke-width="0.15" textLength="33.6" lengthAdjust="spacingAndGlyphs" text-rendering="geometricPrecision" >Formato</text>
<text x="2.34" y="113" font-size="8.7" fill="#1a1a1a" stroke="#1a1a1a" stroke-width="0.15" textLength="48.54" lengthAdjust="spacingAndGlyphs" text-rendering="geometricPrecision" >Portapapeles</text>
<text x="127.72" y="113" font-size="8.7" fill="#1a1a1a" stroke="#1a1a1a" stroke-width="0.15" textLength="24.99" lengthAdjust="spacingAndGlyphs" text-rendering="geometricPrecision" >Fuente</text>
<text x="243.22" y="113" font-size="8.7" fill="#1a1a1a" stroke="#1a1a1a" stroke-width="0.15" textLength="38.68" lengthAdjust="spacingAndGlyphs" text-rendering="geometricPrecision" >Alineación</text>
<text x="326.16" y="113" font-size="8.7" fill="#1a1a1a" stroke="#1a1a1a" stroke-width="0.15" textLength="30.24" lengthAdjust="spacingAndGlyphs" text-rendering="geometricPrecision" >Número</text>
<text x="435.36" y="113" font-size="8.7" fill="#1a1a1a" stroke="#1a1a1a" stroke-width="0.15" textLength="24.26" lengthAdjust="spacingAndGlyphs" text-rendering="geometricPrecision" >Estilos</text>
<text x="538.37" y="113" font-size="8.7" fill="#1a1a1a" stroke="#1a1a1a" stroke-width="0.15" textLength="24.09" lengthAdjust="spacingAndGlyphs" text-rendering="geometricPrecision" >Celdas</text>
<text x="603.2" y="113" font-size="8.7" fill="#1a1a1a" stroke="#1a1a1a" stroke-width="0.15" textLength="28.63" lengthAdjust="spacingAndGlyphs" text-rendering="geometricPrecision" >Edición</text>
<text x="8.62" y="137" font-size="10.2" fill="#333" textLength="11.54" lengthAdjust="spacingAndGlyphs" text-rendering="geometricPrecision" >A1</text>
<text x="81.71" y="442" font-size="10.2" fill="#0b6e3e" textLength="25.03" lengthAdjust="spacingAndGlyphs" text-rendering="geometricPrecision" font-weight="bold">Hoja1</text>
<text x="4.72" y="461" font-size="8.7" fill="#222" stroke="#222" stroke-width="0.15" textLength="17.3" lengthAdjust="spacingAndGlyphs" text-rendering="geometricPrecision" >Listo</text>
<text x="640.11" y="460" font-size="8.7" fill="#222" stroke="#222" stroke-width="0.15" textLength="21.69" lengthAdjust="spacingAndGlyphs" text-rendering="geometricPrecision" >100 %</text>
</svg>
</body></html>
